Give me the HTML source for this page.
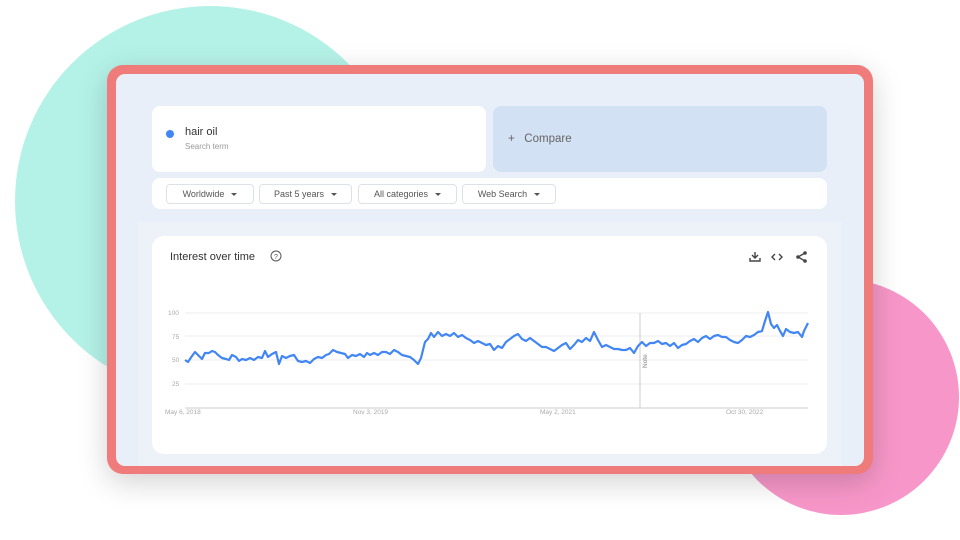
<!DOCTYPE html>
<html><head><meta charset="utf-8"><style>
*{margin:0;padding:0;box-sizing:border-box}
body{width:960px;height:540px;background:#fff;position:relative;overflow:hidden;font-family:"Liberation Sans",Arial,sans-serif}
.teal{position:absolute;left:15px;top:6px;width:390px;height:390px;border-radius:50%;background:#b4f2e8}
.pink{position:absolute;left:723px;top:279px;width:236px;height:236px;border-radius:50%;background:#f797c9}
.frame{position:absolute;left:107px;top:65px;width:766px;height:409px;border-radius:16px;background:#ef7b7b;box-shadow:0 8px 30px rgba(0,0,0,.18)}
.inner{position:absolute;left:9px;top:9px;width:748px;height:392px;border-radius:9px;background:#e9eff8;overflow:hidden}
.card{position:absolute;background:#fff;border-radius:8px}
.chip{position:absolute;top:6px;height:20px;border:1px solid #dde2e8;border-radius:4px;font-size:9px;color:#555;text-align:center;line-height:18px}
.chip:after{content:"";display:inline-block;margin-left:7px;border-left:3px solid transparent;border-right:3px solid transparent;border-top:3px solid #555;vertical-align:middle}
</style></head><body>
<div class="teal"></div>
<div class="pink"></div>
<div class="frame"><div class="inner">
  <div class="card" style="left:36px;top:32px;width:334px;height:66px">
    <div style="position:absolute;left:14px;top:24px;width:8px;height:8px;border-radius:50%;background:#4285f4"></div>
    <div style="position:absolute;left:33px;top:20px;font-size:11px;color:#333">hair oil</div>
    <div style="position:absolute;left:33px;top:36px;font-size:8px;color:#999">Search term</div>
  </div>
  <div style="position:absolute;left:377px;top:32px;width:334px;height:66px;border-radius:8px;background:#d3e1f4">
    <div style="position:absolute;left:15px;top:27px;font-size:11.5px;color:#666">+&nbsp;&nbsp; Compare</div>
  </div>
  <div class="card" style="left:36px;top:104px;width:675px;height:31px">
    <div class="chip" style="left:14px;width:88px">Worldwide</div>
    <div class="chip" style="left:107px;width:93px">Past 5 years</div>
    <div class="chip" style="left:206px;width:99px">All categories</div>
    <div class="chip" style="left:310px;width:94px">Web Search</div>
  </div>
  <div style="position:absolute;left:22px;top:148px;width:703px;height:260px;background:#edf2f9"></div>
  <div class="card" style="left:36px;top:162px;width:675px;height:218px;border-radius:12px"></div>
</div></div>
<div style="position:absolute;left:170px;top:251px;font-size:11px;color:#333">Interest over time</div>
<svg style="position:absolute;left:0;top:0" width="960" height="540">
  <circle cx="276" cy="256" r="5" fill="none" stroke="#555" stroke-width="1"/>
  <text x="276" y="259" font-size="7" text-anchor="middle" fill="#555" font-family="Liberation Sans">?</text>
  <g stroke="#444" stroke-width="1.4" fill="none">
    <path d="M755 252v5M752 255l3 3 3-3M750 258v3h10v-3"/>
    <path d="M775 254l-3 3 3 3M779 254l3 3-3 3"/>
    <path d="M805 253l-7 4 7 4"/>
  </g>
  <circle cx="805" cy="253" r="1.8" fill="#444"/><circle cx="798" cy="257" r="1.8" fill="#444"/><circle cx="805" cy="261" r="1.8" fill="#444"/>
  <g stroke="#eee" stroke-width="1">
    <line x1="185" y1="313" x2="808" y2="313"/><line x1="185" y1="336" x2="808" y2="336"/>
    <line x1="185" y1="360" x2="808" y2="360"/><line x1="185" y1="384" x2="808" y2="384"/>
  </g>
  <line x1="185" y1="408" x2="808" y2="408" stroke="#ccc"/>
  <line x1="640" y1="313" x2="640" y2="408" stroke="#ccc"/>
  <text x="647" y="368" font-size="6.5" fill="#888" transform="rotate(-90 647 368)" font-family="Liberation Sans">Note</text>
  <g font-size="6.5" fill="#aaa" font-family="Liberation Sans">
    <text x="168" y="315">100</text><text x="172" y="339">75</text><text x="172" y="362">50</text><text x="172" y="386">25</text>
    <text x="165" y="414">May 6, 2018</text><text x="353" y="414">Nov 3, 2019</text><text x="540" y="414">May 2, 2021</text><text x="726" y="414">Oct 30, 2022</text>
  </g>
  <polyline fill="none" stroke="#4285f4" stroke-width="2.2" stroke-linejoin="round" points="
185,360 188,362 192,356 195,352 199,356 202,359 205,353 209,353 212,351 215,352 218,355 222,358 226,359 229,360 232,355 236,357 239,361 242,359 246,360 250,358 254,360 258,357 262,358 265,351 268,357 272,354 276,352 279,364 282,356 286,358 290,356 294,355 298,361 302,362 306,361 310,363 314,359 318,357 322,358 326,355 329,354 333,350 337,352 341,353 345,354 348,358 352,355 356,356 360,354 364,357 367,353 370,355 374,353 378,355 382,352 386,352 390,354 394,350 398,352 402,355 406,356 410,357 414,360 418,364 421,358 425,342 428,339 431,333 434,337 438,332 442,336 446,334 450,336 454,333 458,337 462,335 466,338 470,340 474,343 478,341 482,343 486,345 490,344 494,350 498,346 502,348 506,342 510,339 514,336 518,334 522,339 526,341 530,338 534,341 538,344 542,347 546,347 550,349 554,351 558,348 562,345 566,343 570,349 574,345 578,340 582,342 586,338 590,341 594,332 598,340 602,347 606,345 610,347 614,349 618,349 622,350 626,350 630,348 634,353 638,346 642,342 646,346 650,343 654,343 658,341 662,344 666,343 670,346 674,343 678,348 682,345 686,344 690,341 694,339 698,342 702,338 706,336 710,339 714,336 718,335 722,337 726,337 730,340 734,342 738,343 742,340 746,336 750,337 754,335 758,332 762,331 765,321 768,312 771,324 774,328 777,325 780,331 783,336 786,329 790,332 794,333 798,332 802,337 804,331 808,323"/>
</svg>
</body></html>
